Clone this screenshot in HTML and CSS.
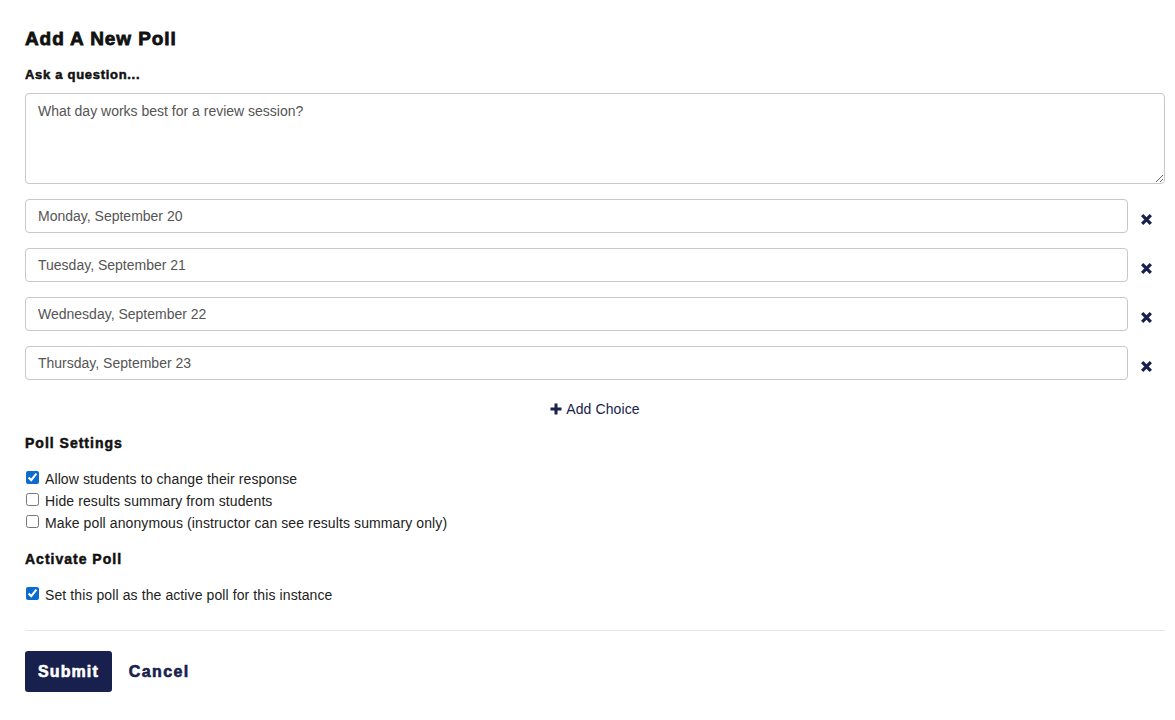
FILE: index.html
```html
<!DOCTYPE html>
<html lang="en">
<head>
  <meta charset="UTF-8" />
  <title>Add A New Poll</title>
  <link rel="stylesheet" href="styles.css">
</head>
<body>
  <form class="poll-form">
    <h1 class="title">Add A New Poll</h1>

    <label class="field-label" for="question">Ask a question...</label>
    <textarea id="question" class="question">What day works best for a review session?</textarea>

    <div class="choices">
      <div class="choice">
        <input class="choice-input" type="text" value="Monday, September 20">
        <button type="button" class="remove" aria-label="Remove choice">
          <svg viewBox="0 0 12 12" width="13" height="13"><path d="M2 2l8 8M10 2l-8 8" /></svg>
        </button>
      </div>
      <div class="choice">
        <input class="choice-input" type="text" value="Tuesday, September 21">
        <button type="button" class="remove" aria-label="Remove choice">
          <svg viewBox="0 0 12 12" width="13" height="13"><path d="M2 2l8 8M10 2l-8 8" /></svg>
        </button>
      </div>
      <div class="choice">
        <input class="choice-input" type="text" value="Wednesday, September 22">
        <button type="button" class="remove" aria-label="Remove choice">
          <svg viewBox="0 0 12 12" width="13" height="13"><path d="M2 2l8 8M10 2l-8 8" /></svg>
        </button>
      </div>
      <div class="choice">
        <input class="choice-input" type="text" value="Thursday, September 23">
        <button type="button" class="remove" aria-label="Remove choice">
          <svg viewBox="0 0 12 12" width="13" height="13"><path d="M2 2l8 8M10 2l-8 8" /></svg>
        </button>
      </div>
    </div>

    <div class="add-row">
      <button type="button" class="add-choice">
        <svg viewBox="0 0 12 12" width="12" height="12"><path d="M6 0.5v11M0.5 6h11" /></svg>
        Add Choice
      </button>
    </div>

    <h2 class="section-title">Poll Settings</h2>
    <div class="checks">
      <label class="check"><input type="checkbox" checked> Allow students to change their response</label>
      <label class="check"><input type="checkbox"> Hide results summary from students</label>
      <label class="check"><input type="checkbox"> Make poll anonymous (instructor can see results summary only)</label>
    </div>

    <h2 class="section-title">Activate Poll</h2>
    <div class="checks">
      <label class="check"><input type="checkbox" checked> Set this poll as the active poll for this instance</label>
    </div>

    <div class="actions">
      <button type="button" class="btn-submit">Submit</button>
      <button type="button" class="btn-cancel">Cancel</button>
    </div>
  </form>
</body>
</html>
```

FILE: styles.css
```css
:root {
  --navy: #18214d;
  --text: #111;
  --input-text: #555;
  --border: #c8c8c8;
  --line: #e6e6e6;
}

* {
  margin: 0;
  padding: 0;
  box-sizing: border-box;
}

body {
  background: #fff;
  color: var(--text);
  font-family: "Liberation Sans", Arial, sans-serif;
  font-size: 14px;
}

.poll-form {
  width: 1140px;
  margin-left: 25px;
  padding-top: 28px;
}

/* headings look like Arial Black, so thicken and widen the bold */
.title,
.field-label,
.section-title,
.btn-submit,
.btn-cancel {
  font-weight: 700;
  -webkit-text-stroke: 0.6px currentColor;
}

.title {
  font-size: 19px;
  line-height: 22px;
  letter-spacing: 0.9px;
  -webkit-text-stroke: 0.8px currentColor;
  margin-bottom: 17px;
}

.field-label {
  display: block;
  font-size: 13px;
  line-height: 16px;
  letter-spacing: 0.7px;
  margin-bottom: 10px;
  -webkit-text-stroke: 0.5px currentColor;
}

.question {
  display: block;
  width: 100%;
  height: 91px;
  border: 1px solid var(--border);
  border-radius: 4px;
  padding: 8px 12px;
  font: 14px/18px "Liberation Sans", Arial, sans-serif;
  color: var(--input-text);
  resize: vertical;
}

.choices {
  margin-top: 15px;
  display: flex;
  flex-direction: column;
  gap: 15px;
}

.choice {
  display: flex;
  align-items: center;
}

.choice-input {
  width: 1103px;
  height: 34px;
  border: 1px solid var(--border);
  border-radius: 4px;
  padding: 0 12px;
  font: 14px "Liberation Sans", Arial, sans-serif;
  color: var(--input-text);
}

.remove {
  background: none;
  border: 0;
  margin-left: 12px;
  margin-top: 6px;
  width: 13px;
  height: 13px;
  display: flex;
}

.remove svg path,
.add-choice svg path {
  stroke: var(--navy);
  stroke-width: 3;
  fill: none;
}

.add-row {
  display: flex;
  justify-content: center;
  margin-top: 21px;
}

.add-choice {
  background: none;
  border: 0;
  display: flex;
  align-items: center;
  gap: 4px;
  font: 14px "Liberation Sans", Arial, sans-serif;
  letter-spacing: 0.1px;
  color: var(--navy);
}

.section-title {
  font-size: 14px;
  line-height: 18px;
  letter-spacing: 1px;
  margin-top: 17px;
  -webkit-text-stroke: 0.5px currentColor;
}

.checks {
  margin-top: 18px;
  display: flex;
  flex-direction: column;
  gap: 4px;
}

.check {
  display: flex;
  align-items: center;
  line-height: 18px;
  letter-spacing: 0.1px;
  color: #222;
}

.check input {
  width: 13px;
  height: 13px;
  margin: -4px 6px 0 1px;
  accent-color: #0b6ccf;
}

.checks + .section-title {
  margin-top: 18px;
}

.actions {
  margin-top: 26px;
  border-top: 1px solid var(--line);
  padding-top: 20px;
  display: flex;
  align-items: center;
  gap: 17px;
}

.btn-submit {
  background: var(--navy);
  color: #fff;
  border: 0;
  border-radius: 3px;
  height: 41px;
  padding: 0 13px;
  font-family: "Liberation Sans", Arial, sans-serif;
  font-size: 16px;
  letter-spacing: 1.1px;
  -webkit-text-stroke: 0.6px #fff;
}

.btn-cancel {
  background: none;
  border: 0;
  color: var(--navy);
  font-family: "Liberation Sans", Arial, sans-serif;
  font-size: 16px;
  letter-spacing: 1.4px;
}
```
